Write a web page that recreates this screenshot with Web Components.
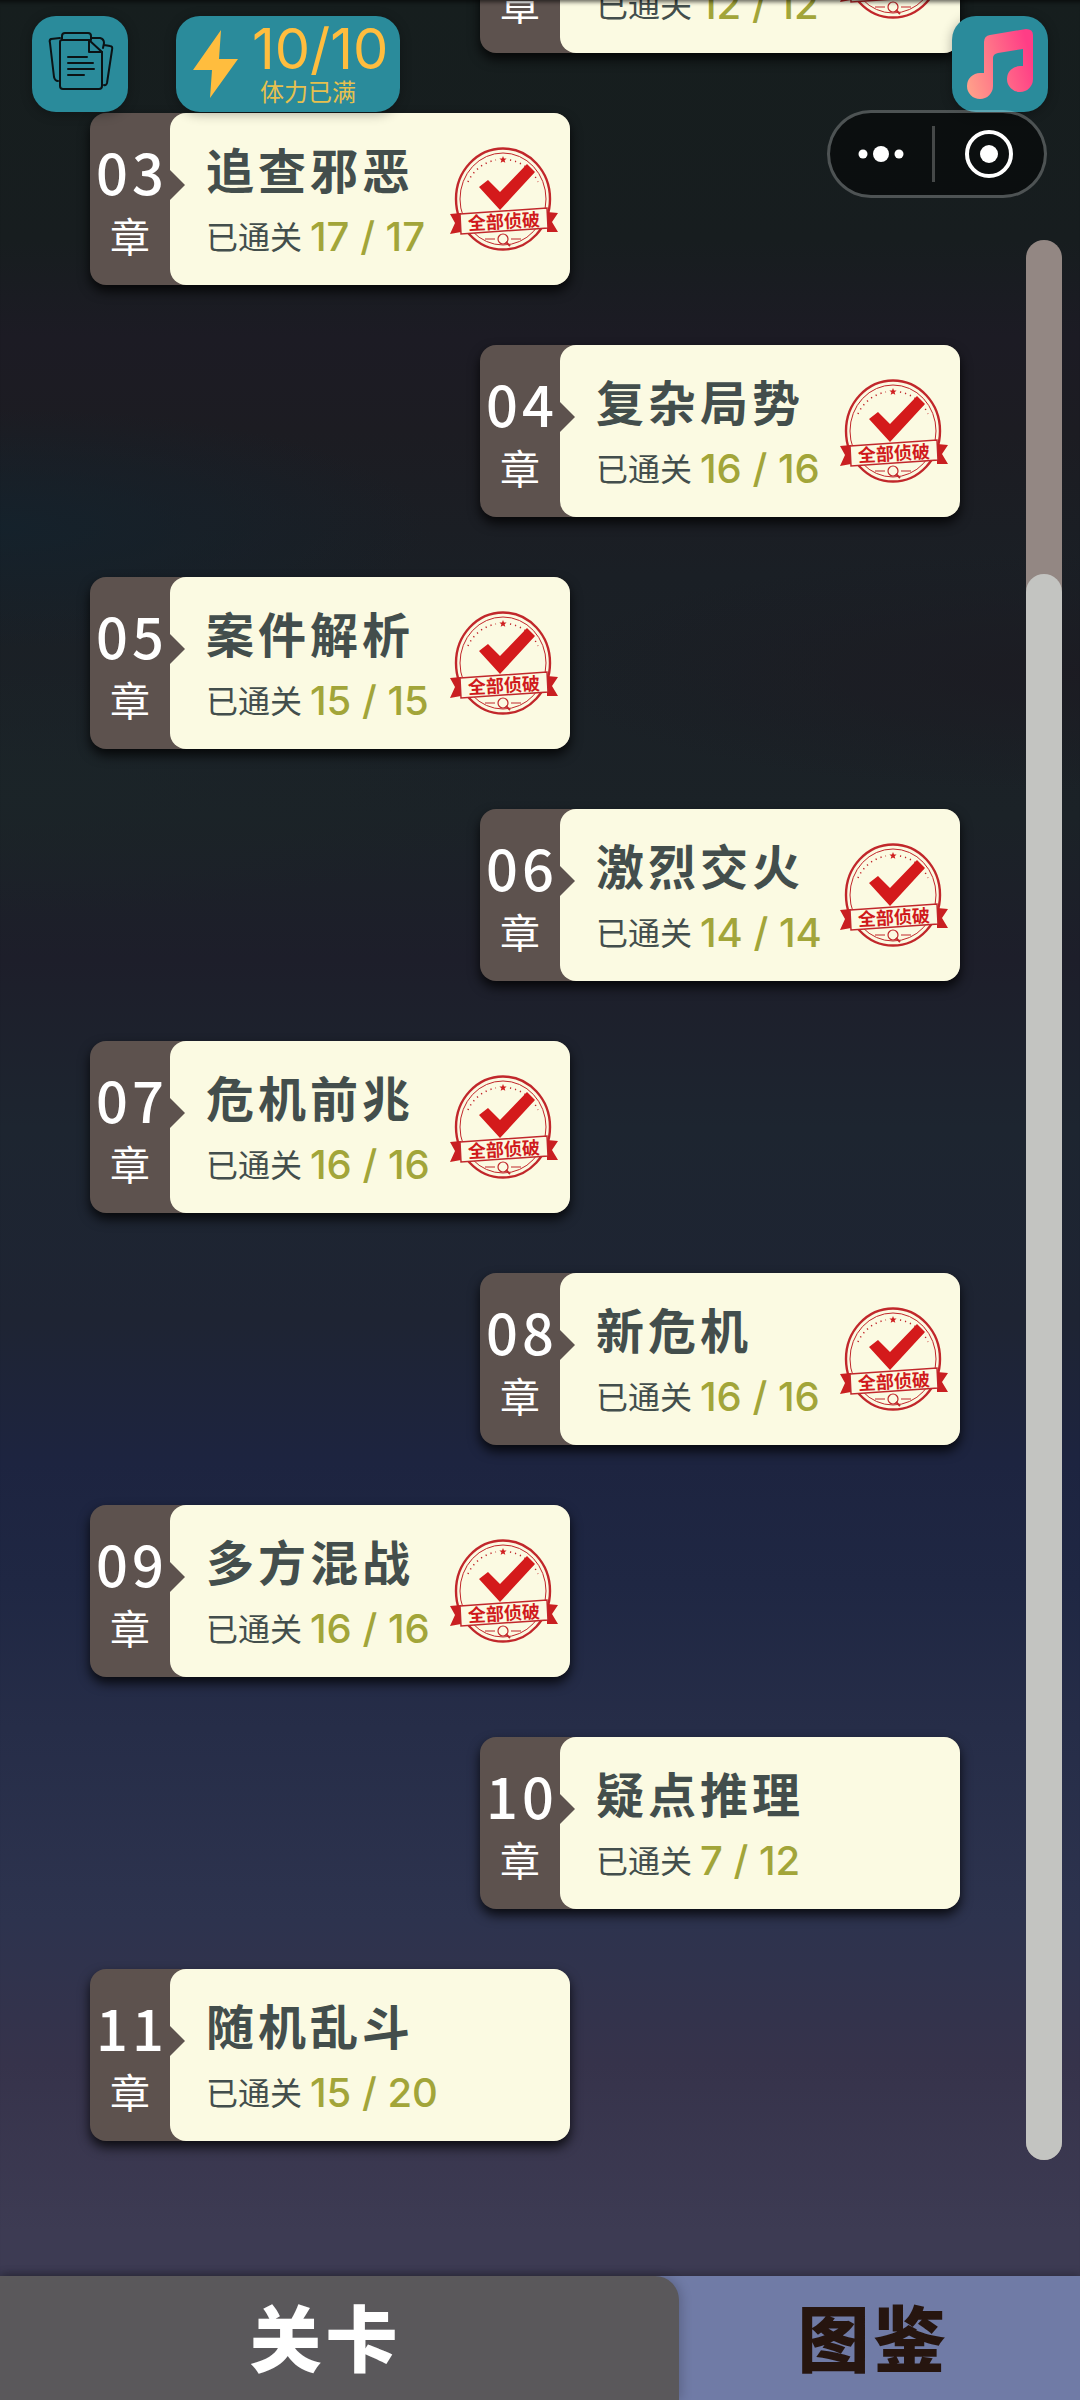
<!DOCTYPE html>
<html lang="zh-CN">
<head>
  <meta charset="utf-8">
  <meta name="viewport" content="width=device-width, initial-scale=1">
  <title>关卡</title>
  <style>
    html {
      height: 100%;
    }

    body {
      margin: 0;
      height: 100%;
      font-family: "Noto Sans CJK SC", sans-serif;
    }
  </style>
</head>
<body>
  <chapter-app></chapter-app>

  <script>
    // icon-button
    class IconButton extends HTMLElement {
      constructor() {
        super();
        this.attachShadow({ mode: "open" });
        this.shadowRoot.innerHTML = `
          <style>
            :host {
              display: block;
            }

            button {
              display: flex;
              align-items: center;
              justify-content: center;
              width: 96px;
              height: 96px;
              padding: 0;
              border: 0;
              border-radius: 24px;
              background: #2a8b9b;
              box-shadow: 0 2px 12px rgba(0, 0, 0, 0.3);
              cursor: pointer;
            }
          </style>
          <button type="button"><slot></slot></button>
        `;
      }

      connectedCallback() {
        this.shadowRoot.querySelector("button").setAttribute("aria-label", this.getAttribute("label"));
      }
    }
    customElements.define("icon-button", IconButton);

    // energy-badge
    class EnergyBadge extends HTMLElement {
      constructor() {
        super();
        this.attachShadow({ mode: "open" });
        this.shadowRoot.innerHTML = `
          <style>
            :host {
              display: flex;
              align-items: center;
              gap: 12px;
              box-sizing: border-box;
              width: 224px;
              height: 96px;
              padding: 0 16px;
              border-radius: 24px;
              background: #2a8b9b;
              box-shadow: 0 2px 12px rgba(0, 0, 0, 0.3);
              color: #ffbd3e;
            }

            svg {
              flex: none;
            }

            .text {
              display: flex;
              flex-direction: column;
              padding-bottom: 6px;
            }

            .count {
              font-family: Inter, sans-serif;
              font-size: 56px;
              line-height: 60px;
            }

            .state {
              padding-left: 8px;
              font-size: 24px;
              line-height: 24px;
              color: #e6c04e;
            }
          </style>
          <svg width="48" height="72" viewBox="0 0 48 72" fill="#ffbd3e">
            <path d="M29 2 L1 42 H20 L18 70 L46 31 H27 Z"/>
          </svg>
          <div class="text">
            <span class="count"><slot name="count"></slot></span>
            <span class="state"><slot name="state"></slot></span>
          </div>
        `;
      }
    }
    customElements.define("energy-badge", EnergyBadge);

    // menu-capsule
    class MenuCapsule extends HTMLElement {
      constructor() {
        super();
        this.attachShadow({ mode: "open" });
        this.shadowRoot.innerHTML = `
          <style>
            :host {
              display: grid;
              grid-template-columns: 28fr 3px 30fr;
              align-items: center;
              box-sizing: border-box;
              width: 220px;
              height: 88px;
              border: 3px solid rgba(255, 255, 255, 0.24);
              border-radius: 44px;
              background: rgba(0, 0, 0, 0.5);
              background-clip: padding-box;
            }

            button {
              display: flex;
              align-items: center;
              justify-content: center;
              padding: 0;
              border: 0;
              background: none;
              cursor: pointer;
            }

            i {
              height: 56px;
              background: #454848;
            }
          </style>
          <button type="button" aria-label="更多">
            <svg width="48" height="48" viewBox="0 0 48 48" fill="#fff">
              <circle cx="6" cy="24" r="4.5"/><circle cx="24" cy="24" r="8"/><circle cx="42" cy="24" r="4.5"/>
            </svg>
          </button>
          <i></i>
          <button type="button" aria-label="关闭">
            <svg width="48" height="48" viewBox="0 0 48 48">
              <circle cx="24" cy="24" r="22" fill="none" stroke="#fff" stroke-width="4"/>
              <circle cx="24" cy="24" r="9" fill="#fff"/>
            </svg>
          </button>
        `;
      }
    }
    customElements.define("menu-capsule", MenuCapsule);

    // solved-stamp
    class SolvedStamp extends HTMLElement {
      constructor() {
        super();
        this.attachShadow({ mode: "open" });
        this.shadowRoot.innerHTML = `
          <style>
            :host {
              display: block;
              width: 108px;
              height: 104px;
            }

            svg {
              display: block;
            }

            text {
              font-family: "Noto Sans CJK SC", sans-serif;
              font-size: 18px;
              font-weight: 700;
            }
          </style>
          <svg width="108" height="104" viewBox="0 0 108 104">
            <g fill="none" stroke="#c1272b">
              <ellipse cx="53" cy="52" rx="47" ry="50.5" stroke-width="2.4"/>
              <ellipse cx="53" cy="52" rx="43" ry="46" stroke-width="1"/>
              <path d="M18 35 A38 38 0 0 1 46 13 M60 13 A38 38 0 0 1 88 35" stroke-width="1.5" stroke-dasharray="1.2 4"/>
            </g>
            <path d="M53 9 l1 2.4 2.6 .2 -2 1.6 .7 2.6 -2.3 -1.4 -2.3 1.4 .7 -2.6 -2 -1.6 2.6 -.2z" fill="#cf1f20"/>
            <path d="M29 40 L38 33 L50 45 L77 17 L85 25 L50 63 Z" fill="#d41a1b"/>
            <path d="M0 67 L11 66 V85 L0 87 L5 76 Z M97 65 L108 66 L102 75 L108 85 L97 85 Z" fill="#c91f21"/>
            <path d="M10 67 L97 61 L98 81 L11 87 Z" fill="#fbfae2" stroke="#c1272b" stroke-width="1.5"/>
            <g fill="none" stroke="#c1272b" stroke-width="1.2">
              <circle cx="53" cy="92" r="5"/>
              <path d="M56 95 L60 99" stroke-width="1.8"/>
              <path d="M35 92 H45 M61 92 H71"/>
            </g>
            <text x="54" y="81" text-anchor="middle" fill="#d01a1c" transform="rotate(-3 54 75)">全部侦破</text>
          </svg>
        `;
      }
    }
    customElements.define("solved-stamp", SolvedStamp);

    // chapter-card
    class ChapterCard extends HTMLElement {
      constructor() {
        super();
        this.attachShadow({ mode: "open" });
        this.shadowRoot.innerHTML = `
          <style>
            :host {
              display: block;
              width: 480px;
            }

            a {
              display: flex;
              height: 172px;
              border-radius: 16px;
              background: #5d524e;
              box-shadow: 0 6px 12px rgba(0, 0, 0, 0.8);
              color: inherit;
              text-decoration: none;
            }

            .index,
            .text {
              display: flex;
              flex-direction: column;
              justify-content: center;
            }

            .index {
              align-items: center;
              width: 80px;
              color: #fff;
            }

            .number {
              padding-left: 4px;
              font-size: 56px;
              font-weight: 500;
              line-height: 72px;
              letter-spacing: 4px;
            }

            .unit {
              font-size: 40px;
              line-height: 56px;
            }

            .body {
              position: relative;
              flex: 1;
              display: flex;
              align-items: center;
              justify-content: space-between;
              padding: 0 12px 0 36px;
              border-radius: 16px;
              background: #fbfae2;
            }

            /* pointer from the index strip into the body */
            .body::before {
              content: "";
              position: absolute;
              left: 0;
              top: 57px;
              border: 15px solid transparent;
              border-left-color: #5d524e;
              border-right: 0;
            }

            .text {
              gap: 6px;
            }

            .title {
              min-height: 66px;
              font-size: 48px;
              font-weight: 700;
              line-height: 66px;
              letter-spacing: 4px;
              color: #434e4c;
            }

            .progress {
              display: flex;
              align-items: center;
              gap: 8px;
              font-size: 32px;
              line-height: 56px;
              color: #434e4c;
            }

            .count {
              margin-top: 4px;
              font-family: Inter, sans-serif;
              font-size: 40px;
              font-weight: 500;
              line-height: 52px;
              color: #a2a539;
            }
          </style>
          <a href="#">
            <div class="index">
              <span class="number"></span>
              <span class="unit">章</span>
            </div>
            <div class="body">
              <div class="text">
                <span class="title"><slot></slot></span>
                <span class="progress">已通关<span class="count"></span></span>
              </div>
            </div>
          </a>
        `;
      }

      connectedCallback() {
        const done = this.getAttribute("done");
        const total = this.getAttribute("total");
        this.shadowRoot.querySelector(".number").textContent = this.getAttribute("number");
        this.shadowRoot.querySelector(".count").textContent = `${done} / ${total}`;

        if (done === total) {
          this.shadowRoot.querySelector(".body").appendChild(document.createElement("solved-stamp"));
        }
      }
    }
    customElements.define("chapter-card", ChapterCard);

    // chapter-list
    class ChapterList extends HTMLElement {
      constructor() {
        super();

        this.chapters = [
          { number: "02", title: "", done: 12, total: 12 },
          { number: "03", title: "追查邪恶", done: 17, total: 17 },
          { number: "04", title: "复杂局势", done: 16, total: 16 },
          { number: "05", title: "案件解析", done: 15, total: 15 },
          { number: "06", title: "激烈交火", done: 14, total: 14 },
          { number: "07", title: "危机前兆", done: 16, total: 16 },
          { number: "08", title: "新危机", done: 16, total: 16 },
          { number: "09", title: "多方混战", done: 16, total: 16 },
          { number: "10", title: "疑点推理", done: 7, total: 12 },
          { number: "11", title: "随机乱斗", done: 15, total: 20 },
        ];

        this.attachShadow({ mode: "open" });
        this.shadowRoot.innerHTML = `
          <style>
            :host {
              display: flex;
              flex-direction: column;
              justify-content: flex-end;
              gap: 60px;
              box-sizing: border-box;
              padding: 0 120px 135px 90px;
              overflow: hidden;
            }

            chapter-card {
              flex: none;
              align-self: flex-start;
            }

            chapter-card:nth-of-type(odd) {
              align-self: flex-end;
            }
          </style>
        `;
      }

      connectedCallback() {
        this.chapters.forEach((chapter) => {
          const card = document.createElement("chapter-card");
          card.setAttribute("number", chapter.number);
          card.setAttribute("done", chapter.done);
          card.setAttribute("total", chapter.total);
          card.textContent = chapter.title;
          this.shadowRoot.appendChild(card);
        });
      }
    }
    customElements.define("chapter-list", ChapterList);

    // scroll-track
    class ScrollTrack extends HTMLElement {
      constructor() {
        super();
        this.attachShadow({ mode: "open" });
        this.shadowRoot.innerHTML = `
          <style>
            :host {
              display: grid;
              grid-template-rows: 4fr 19fr;
              width: 36px;
              border-radius: 18px;
              background: #938783;
            }

            .thumb {
              grid-row: 2;
              border-radius: 18px;
              background: #c3c4c1;
            }
          </style>
          <div class="thumb"></div>
        `;
      }
    }
    customElements.define("scroll-track", ScrollTrack);

    // tab-bar
    class TabBar extends HTMLElement {
      constructor() {
        super();
        this.attachShadow({ mode: "open" });
        this.shadowRoot.innerHTML = `
          <style>
            :host {
              display: grid;
              grid-template-columns: 22fr 13fr;
              height: 124px;
              background: #707ba6;
              box-shadow: 0 -2px 8px rgba(0, 0, 0, 0.25);
            }

            button {
              border: 0;
              padding: 0 12px 6px 0;
              background: none;
              color: #26150f;
              font-family: inherit;
              font-size: 72px;
              font-weight: 900;
              line-height: 96px;
              letter-spacing: 4px;
              cursor: pointer;
            }

            button[aria-selected="true"] {
              padding-right: 28px;
              border-top-right-radius: 24px;
              background: #5a585b;
              box-shadow: 2px 0 12px rgba(0, 0, 0, 0.2);
              color: #fff;
            }
          </style>
          <button type="button" role="tab" aria-selected="true">关卡</button>
          <button type="button" role="tab" aria-selected="false">图鉴</button>
        `;
      }
    }
    customElements.define("tab-bar", TabBar);

    // chapter-app
    class ChapterApp extends HTMLElement {
      constructor() {
        super();
        this.attachShadow({ mode: "open" });
        this.shadowRoot.innerHTML = `
          <style>
            :host {
              position: relative;
              display: flex;
              flex-direction: column;
              height: 100%;
              overflow: hidden;
              background:
                radial-gradient(ellipse 40% 5% at 0% 22%, rgba(20, 34, 44, 0.9), transparent),
                radial-gradient(ellipse 50% 5% at 100% 28%, rgba(28, 27, 34, 0.9), transparent),
                radial-gradient(ellipse 50% 5% at 0% 33%, rgba(27, 36, 40, 0.9), transparent),
                linear-gradient(#161e1e 0%, #171d1f 10%, #1c1b24 14%, #1c1c22 18%, #1a1f25 24%, #1b2227 34%, #1d1e2a 40%, #1d2530 47%, #1e2433 55%, #1d2440 61%, #1f2743 66%, #262d48 72%, #2d334e 80%, #36334b 86%, #3d3b53 93%);
            }

            chapter-list {
              flex: 1;
              min-height: 0;
            }

            /* the controls float over the scrolled list */
            .overlay {
              position: absolute;
              inset: 0 0 124px;
              display: flex;
              flex-direction: column;
              align-items: flex-end;
              box-shadow: inset 0 6px 4px -4px rgba(0, 0, 0, 0.6);
              pointer-events: none;
            }

            header {
              align-self: stretch;
              display: flex;
              gap: 48px;
              padding: 16px 32px 0;
            }

            header icon-button:last-child {
              margin-left: auto;
            }

            menu-capsule {
              margin: -2px 33px 0 0;
            }

            scroll-track {
              flex: 1;
              margin: 42px 18px 116px 0;
            }

            header > *,
            menu-capsule,
            scroll-track {
              pointer-events: auto;
            }
          </style>
          <chapter-list></chapter-list>
          <tab-bar role="tablist"></tab-bar>
          <div class="overlay">
            <header>
              <icon-button label="档案">
                <svg width="72" height="72" viewBox="0 0 72 72" fill="none" stroke="#0b1214" stroke-width="2" stroke-linejoin="round" stroke-linecap="round">
                  <path d="M18 12 H45 L58 24 V58 Q58 61 55 61 H19 Q16 61 16 58 V14 Q16 12 18 12 Z"/>
                  <path d="M45 12 V24 H58"/>
                  <path d="M18 12 V8 Q18 5 21 5 H44 Q47 5 47 8 V12"/>
                  <path d="M16 10 L7 11 Q5 12 6 15 L10 49 Q11 53 14 53"/>
                  <path d="M48 10 L56 10 Q60 11 60 15 L59 20 M60 17 L66 18 Q69 18 68 22 L63 55 Q62 58 60 57"/>
                  <path d="M24 29 H43 M24 35 H49 M24 41 H50 M24 47 H40"/>
                </svg>
              </icon-button>
              <energy-badge>
                <span slot="count">10/10</span>
                <span slot="state">体力已满</span>
              </energy-badge>
              <icon-button label="音乐">
                <svg width="66" height="70" viewBox="0 0 66 70">
                  <defs>
                    <linearGradient id="note" x1="0" y1="0.8" x2="1" y2="0.5">
                      <stop offset="0" stop-color="#ffa08a"/>
                      <stop offset="1" stop-color="#ff3d86"/>
                    </linearGradient>
                  </defs>
                  <path fill="url(#note)" d="M17 13 Q17 7 23 6 L59 0 Q66 0 66 6 V50 A13 13 0 1 1 53 37 H56 V20 L31 24 Q26 25 26 29 V57 A13 13 0 1 1 13 44 H17 Z"/>
                </svg>
              </icon-button>
            </header>
            <menu-capsule></menu-capsule>
            <scroll-track role="scrollbar" aria-label="章节"></scroll-track>
          </div>
        `;
      }
    }
    customElements.define("chapter-app", ChapterApp);
  </script>
</body>
</html>
